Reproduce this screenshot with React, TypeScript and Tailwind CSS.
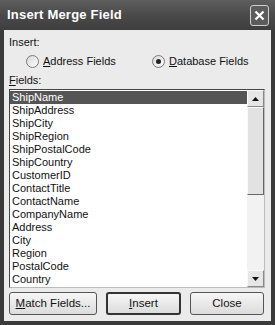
import { useState } from 'react';

const fields = [
  'ShipName',
  'ShipAddress',
  'ShipCity',
  'ShipRegion',
  'ShipPostalCode',
  'ShipCountry',
  'CustomerID',
  'ContactTitle',
  'ContactName',
  'CompanyName',
  'Address',
  'City',
  'Region',
  'PostalCode',
  'Country',
];

function Radio({ checked, label, accel }: { checked: boolean; label: string; accel: string }) {
  return (
    <label className="flex items-center gap-[4px]">
      <span className="w-[13px] h-[13px] rounded-full border border-[#7a7a7a] bg-gradient-to-br from-[#d8d8d8] to-white flex items-center justify-center">
        {checked && <span className="w-[5px] h-[5px] rounded-full bg-[#222]" />}
      </span>
      <span>
        <span className="underline">{accel}</span>
        {label}
      </span>
    </label>
  );
}

function Btn({ children, primary }: { children: React.ReactNode; primary?: boolean }) {
  return (
    <button
      className={`h-[23px] rounded-[3px] bg-gradient-to-b from-[#f6f6f6] to-[#dcdcdc] text-[#111] text-[11.5px] ${
        primary ? 'border-2 border-[#333]' : 'border border-[#555]'
      }`}
    >
      {children}
    </button>
  );
}

export default function App() {
  const [sel, setSel] = useState(0);

  return (
    <div
      className="w-[275px] h-[325px] bg-[#3a3a3a] flex flex-col text-[11px] text-[#111]"
      style={{ fontFamily: '"Liberation Sans", Arial, sans-serif' }}
    >
      {/* title bar */}
      <div className="h-[30px] shrink-0 flex items-center justify-between pl-[7px] pr-[6px] bg-gradient-to-b from-[#5e5e5e] via-[#4a4a4a] to-[#3e3e3e]">
        <span className="text-white font-bold text-[13px] tracking-[0.2px]">Insert Merge Field</span>
        <span className="w-[19px] h-[21px] rounded-[3px] border border-[#cfcfcf] bg-[#5c5c5c] flex items-center justify-center">
          <svg width="11" height="11" viewBox="0 0 11 11">
            <path d="M1.5 1.5 L9.5 9.5 M9.5 1.5 L1.5 9.5" stroke="white" strokeWidth="2.2" />
          </svg>
        </span>
      </div>

      {/* body */}
      <div className="flex-1 mx-[4px] mb-[4px] bg-[#ebebeb] flex flex-col px-[5px] pt-[6px]">
        <div className="h-[13px] leading-[13px]">Insert:</div>
        <div className="flex items-center mt-[5px] h-[14px]">
          <div className="ml-[17px] w-[126px]">
            <Radio checked={false} accel="A" label="ddress Fields" />
          </div>
          <Radio checked accel="D" label="atabase Fields" />
        </div>
        <div className="mt-[6px] h-[13px] leading-[13px]">
          <span className="underline">F</span>ields:
        </div>

        {/* list box */}
        <div className="mt-[2px] w-[256px] h-[199px] border border-[#444] border-r-[#bbb] border-b-[#bbb] bg-white flex">
          <div className="flex-1 pt-[1px] overflow-hidden">
            {fields.map((f, i) => (
              <div
                key={f}
                onClick={() => setSel(i)}
                className={`h-[13px] leading-[13px] pl-[2px] ${
                  i === sel ? 'bg-[#555] text-white' : ''
                }`}
              >
                {f}
              </div>
            ))}
          </div>
          <div className="w-[17px] flex flex-col bg-[#f2f2f2]">
            <div className="h-[17px] border border-[#888] border-t-[#fafafa] border-l-[#fafafa] bg-[#e6e6e6] flex items-center justify-center">
              <svg width="7" height="4" viewBox="0 0 7 4">
                <path d="M3.5 0 L7 4 L0 4 Z" fill="#111" />
              </svg>
            </div>
            <div className="h-[88px] border border-[#666] border-t-[#fafafa] border-l-[#fafafa] bg-[#e2e2e2]" />
            <div className="flex-1" />
            <div className="h-[17px] border border-[#888] border-t-[#fafafa] border-l-[#fafafa] bg-[#e6e6e6] flex items-center justify-center">
              <svg width="7" height="4" viewBox="0 0 7 4">
                <path d="M0 0 L7 0 L3.5 4 Z" fill="#111" />
              </svg>
            </div>
          </div>
        </div>

        {/* buttons */}
        <div className="mt-[4px] grid grid-cols-[88px_75px_74px] gap-x-[9px]">
          <Btn>
            <span className="underline">M</span>atch Fields...
          </Btn>
          <Btn primary>
            <span className="underline">I</span>nsert
          </Btn>
          <Btn>Close</Btn>
        </div>
      </div>
    </div>
  );
}
